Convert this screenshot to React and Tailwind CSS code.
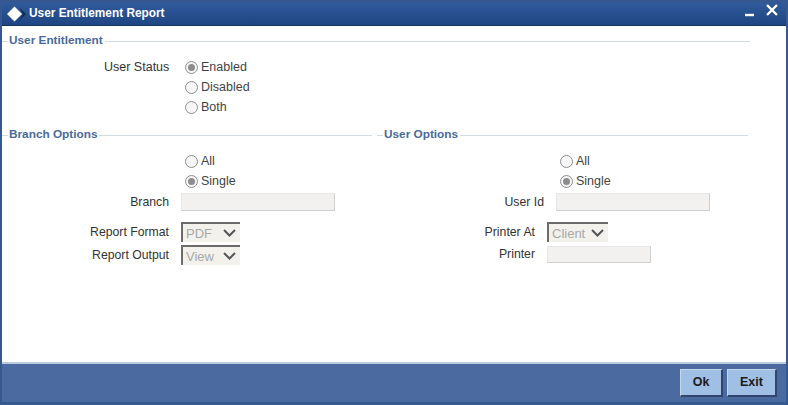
const font = { fontFamily: '"Liberation Sans", Arial, sans-serif' };

function Legend({ title, className }) {
  return (
    <div className={`flex items-center h-[20px] ${className}`}>
      <span className="w-[6px] h-[1px] bg-[#d3dbe3]" />
      <span className="text-[11.8px] font-bold text-[#4a6a9c] px-[1px] whitespace-nowrap">{title}</span>
      <span className="flex-1 ml-[1px] h-[1px] bg-[#d3dbe3]" />
    </div>
  );
}

function Radio({ label, checked }) {
  return (
    <div className="flex items-center h-[20px] gap-[3px] text-[12.5px] text-[#444]">
      <span className="w-[13px] h-[13px] rounded-full border border-[#8f8f8f] bg-[#f6f6f6] flex items-center justify-center">
        {checked && <span className="w-[7px] h-[7px] rounded-full bg-[#8c8c8c]" />}
      </span>
      {label}
    </div>
  );
}

function Field({ label, labelWidth, width, height = "h-[18px]" }) {
  return (
    <div className="flex items-center">
      <span className="text-[12.25px] text-[#333] text-right" style={{ width: labelWidth }}>{label}</span>
      <span className={`ml-[12px] ${height} bg-[#f2f1ef] border border-[#e6e6e6] border-b-[#cfcfcf] border-r-[#cfcfcf]`} style={{ width }} />
    </div>
  );
}

function Select({ label, value, labelWidth, width }) {
  return (
    <div className="flex items-center">
      <span className="text-[12.25px] text-[#333] text-right" style={{ width: labelWidth }}>{label}</span>
      <span
        className="ml-[12px] h-[20px] bg-[#f2f1ec] border-l-2 border-t-2 border-[#6b6b6b] flex items-center justify-between pl-[3px] pr-[4px] text-[13px] text-[#a8a8a8]"
        style={{ width }}
      >
        {value}
        <svg width="13" height="8" viewBox="0 0 13 8" fill="none" stroke="#555" strokeWidth="2">
          <path d="M1 1 L6.5 6.5 L12 1" />
        </svg>
      </span>
    </div>
  );
}

export default function App() {
  return (
    <div style={font} className="w-[788px] h-[405px] bg-[#34588f] flex flex-col pt-[3px] pl-[2px] pr-[2px] pb-[3px] overflow-hidden">
      {/* title bar */}
      <div className="h-[23px] shrink-0 flex items-center bg-gradient-to-b from-[#2f5a9b] to-[#1f4583] border-b border-[#16305f] text-white">
        <svg width="20" height="16" viewBox="0 0 20 16" className="ml-[5px]">
          <path d="M7.5 0.5 L15 8 L7.5 15.5 L0 8 Z" fill="#fff" />
          <path d="M12 1 L19 8 L12 15 L16 8 Z" fill="#0f2a58" />
        </svg>
        <span className="ml-[2px] text-[11.85px] font-bold">User Entitlement Report</span>
        <svg width="34" height="16" viewBox="0 0 34 16" className="ml-auto mr-[7px] -mt-[5px]" fill="none" stroke="#fff" strokeWidth="2.4">
          <path d="M0 11 H9" />
          <path d="M22 1 L32 11 M32 1 L22 11" />
        </svg>
      </div>

      {/* form body */}
      <div className="h-[336px] shrink-0 bg-white pt-[5px]">
        <Legend title="User Entitlement" className="w-[748px]" />
        <div className="flex mt-[6px] ml-[102px]">
          <span className="w-[65px] text-right text-[12.5px] text-[#333] leading-[20px] whitespace-nowrap">User Status</span>
          <div className="ml-[16px]">
            <Radio label="Enabled" checked />
            <Radio label="Disabled" />
            <Radio label="Both" />
          </div>
        </div>

        <div className="flex mt-[8px]">
          {/* branch options */}
          <div className="w-[370px] mr-[5px]">
            <Legend title="Branch Options" />
            <div className="ml-[183px] mt-[6px]">
              <Radio label="All" />
              <Radio label="Single" checked />
            </div>
            <div className="mt-[2px]">
              <Field label="Branch" labelWidth={167} width={154} />
            </div>
            <div className="mt-[11px] flex flex-col gap-[3px]">
              <Select label="Report Format" value="PDF" labelWidth={167} width={59} />
              <Select label="Report Output" value="View" labelWidth={167} width={59} />
            </div>
          </div>

          {/* user options */}
          <div className="w-[371px]">
            <Legend title="User Options" />
            <div className="ml-[183px] mt-[6px]">
              <Radio label="All" />
              <Radio label="Single" checked />
            </div>
            <div className="mt-[2px]">
              <Field label="User Id" labelWidth={167} width={154} />
            </div>
            <div className="mt-[11px] flex flex-col gap-[3px]">
              <Select label="Printer At" value="Client" labelWidth={158} width={61} />
              <Field label="Printer" labelWidth={158} width={104} height="h-[17px]" />
            </div>
          </div>
        </div>
      </div>

      {/* footer */}
      <div className="flex-1 bg-[#4b6a9f] border-t-2 border-[#bcc9de] flex items-start justify-end gap-[4px] pt-[5px] pr-[9px]">
        <button className="w-[43px] h-[28px] bg-[#a0bfe4] border-t border-l border-[#c5d6ec] border-b-2 border-r-2 border-b-[#30466f] border-r-[#30466f] text-[12.5px] font-bold text-[#1a1a1a]">Ok</button>
        <button className="w-[50px] h-[28px] bg-[#a0bfe4] border-t border-l border-[#c5d6ec] border-b-2 border-r-2 border-b-[#30466f] border-r-[#30466f] text-[12.5px] font-bold text-[#1a1a1a]">Exit</button>
      </div>
    </div>
  );
}
